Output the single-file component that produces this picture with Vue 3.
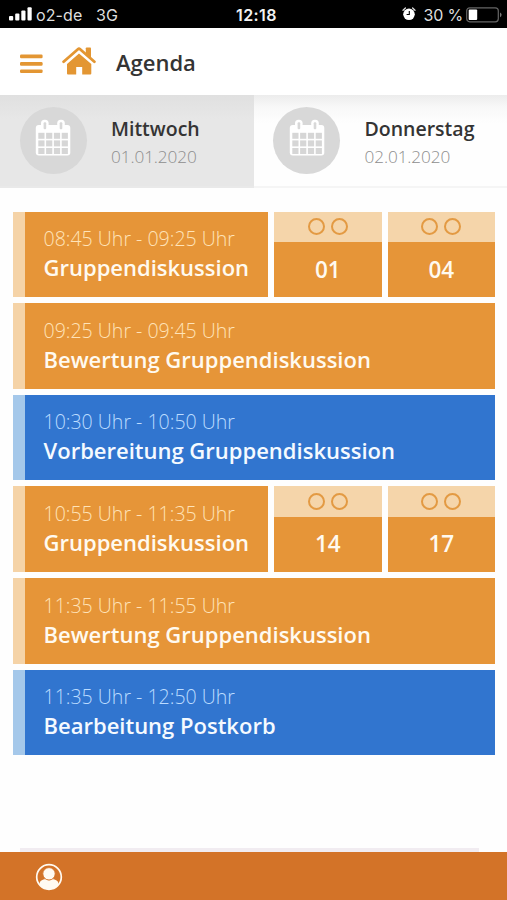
<script setup>
const days = [
  { name: 'Mittwoch', date: '01.01.2020', active: true },
  { name: 'Donnerstag', date: '02.01.2020', active: false },
]
const entries = [
  { time: '08:45 Uhr - 09:25 Uhr', title: 'Gruppendiskussion', rooms: ['01', '04'] },
  { time: '09:25 Uhr - 09:45 Uhr', title: 'Bewertung Gruppendiskussion' },
  { time: '10:30 Uhr - 10:50 Uhr', title: 'Vorbereitung Gruppendiskussion', blue: true },
  { time: '10:55 Uhr - 11:35 Uhr', title: 'Gruppendiskussion', rooms: ['14', '17'] },
  { time: '11:35 Uhr - 11:55 Uhr', title: 'Bewertung Gruppendiskussion' },
  { time: '11:35 Uhr - 12:50 Uhr', title: 'Bearbeitung Postkorb', blue: true },
]
const cells = [0, 1, 2, 3]
</script>

<template>
  <div class="screen">
    <div class="status">
      <svg class="signal" width="23" height="14" viewBox="0 0 23 14" fill="#fff">
        <rect x="0" y="9" width="4.2" height="4.6" rx="1" />
        <rect x="6.2" y="6.6" width="4.2" height="7" rx="1" />
        <rect x="12.3" y="3.6" width="4.2" height="10" rx="1" />
        <rect x="18.5" y="0.3" width="4.2" height="13.3" rx="1" />
      </svg>
      <span class="carrier">o2-de</span>
      <span class="network">3G</span>
      <span class="clock">12:18</span>
      <svg class="alarm" width="14" height="14" viewBox="0 0 14 14">
        <path d="M1 3.2 3.4 1M13 3.2 10.6 1" stroke="#ddd" stroke-width="1.3" stroke-linecap="round" />
        <circle cx="7" cy="7.3" r="5.8" fill="#fff" />
        <path d="M7.3 3.9v3.6H4.6" fill="none" stroke="#000" stroke-width="1.1" />
      </svg>
      <span class="percent">30 %</span>
      <svg class="battery" width="36" height="16" viewBox="0 0 36 16">
        <rect x="0.7" y="0.8" width="31.6" height="14" rx="3" fill="none" stroke="#666" stroke-width="1.2" />
        <rect x="2.7" y="2.6" width="8.5" height="10.4" rx="1" fill="#fff" />
        <path d="M34 5.4q1.6.8 1.6 2.4T34 10.2z" fill="#777" />
      </svg>
    </div>

    <header class="header">
      <svg class="menu" width="23" height="20" viewBox="0 0 23 20" fill="#e39633">
        <rect x="0" y="0.6" width="22.6" height="3.6" rx="1.2" />
        <rect x="0" y="8.1" width="22.6" height="3.6" rx="1.2" />
        <rect x="0" y="15.4" width="22.6" height="3.6" rx="1.2" />
      </svg>
      <svg class="home" width="34" height="29" viewBox="0 0 34 29">
        <path d="M17 6.4 29.3 17v9.4q0 1-1 1h-8.1v-7.4h-6v7.4H6q-1 0-1-1V17z" fill="#e39633" />
        <path d="M1.6 15.4 17 2.2l15.4 13.2" fill="none" stroke="#fff" stroke-width="4.4" />
        <path d="M23.8 1.3q0-.8.8-.8h3.6q.8 0 .8.8v10.4L23.8 7z" fill="#e39633" />
        <path d="M1.6 14.7 15.9 2.2q1.1-1 2.2 0l14.3 12.5" fill="none" stroke="#e39633" stroke-width="2.8" stroke-linecap="round" />
      </svg>
      <h1>Agenda</h1>
    </header>

    <nav class="days">
      <div v-for="d in days" :key="d.name" class="day" :class="{ active: d.active }">
        <div class="badge">
          <svg width="36" height="38" viewBox="0 0 36 38">
            <rect x="0.8" y="6" width="34.5" height="30.6" rx="3" fill="#fff" />
            <rect x="6" y="0.8" width="7.6" height="12" rx="3.5" fill="#fff" />
            <rect x="22.2" y="0.8" width="7.6" height="12" rx="3.5" fill="#fff" />
            <rect x="8.6" y="3.2" width="2.6" height="7" rx="1" fill="#d8d8d8" />
            <rect x="24.7" y="3.2" width="2.6" height="7" rx="1" fill="#d8d8d8" />
            <g fill="#d6d6d6">
              <template v-for="r in 3" :key="r">
                <rect v-for="c in cells" :key="c" :x="3.3 + c * 7.8" :y="13.8 + (r - 1) * 7.6" width="6.2" height="6" />
              </template>
            </g>
          </svg>
        </div>
        <div class="day-text">
          <div class="day-name">{{ d.name }}</div>
          <div class="day-date">{{ d.date }}</div>
        </div>
      </div>
    </nav>

    <main class="agenda">
      <div v-for="(e, i) in entries" :key="i" class="row">
        <section class="entry" :class="{ blue: e.blue }">
          <div class="time">{{ e.time }}</div>
          <div class="title">{{ e.title }}</div>
        </section>
        <div v-for="room in e.rooms" :key="room" class="room">
          <div class="rings"><i></i><i></i></div>
          <div class="number">{{ room }}</div>
        </div>
      </div>
    </main>

    <div class="peek"></div>
    <footer class="footer">
      <svg width="28" height="28" viewBox="0 0 28 28">
        <defs>
          <clipPath id="profile-clip"><circle cx="14" cy="14" r="12.5" /></clipPath>
        </defs>
        <g clip-path="url(#profile-clip)" fill="#fffaf2">
          <path d="M4.5 28v-7q.3-3.4 4-4.4l2-.6q3.5 2.5 7 0l2 .6q3.700 1 4 4.400v7z" />
          <circle cx="14" cy="10.800" r="6.200" stroke="#d37328" stroke-width="0.900" />
        </g>
        <circle cx="14" cy="14" r="12.300" fill="none" stroke="#fffaf2" stroke-width="1.700" />
      </svg>
    </footer>
  </div>
</template>

<style>
body {
  margin: 0;
  background: #fff;
}
</style>

<style scoped>
.screen {
  width: 507px;
  height: 900px;
  display: flex;
  flex-direction: column;
  overflow: hidden;
  background: #fefefe;
  font-family: "Open Sans", "Noto Sans", sans-serif;
}
.status {
  height: 27.5px;
  flex: none;
  display: flex;
  align-items: center;
  box-sizing: border-box;
  padding: 3px 5px 0 9px;
  background: #000;
  color: #dedede;
  font: 16px/24px Inter, "Liberation Sans", sans-serif;
  white-space: nowrap;
}
.signal {
  margin-bottom: 2px;
}
.carrier {
  width: 60px;
  margin-left: 4px;
  letter-spacing: 0.1px;
}
.network {
  width: 140px;
}
.clock {
  width: 165.5px;
  color: #f2f2f2;
  font-weight: 600;
  letter-spacing: 0.4px;
}
.alarm {
  margin-bottom: 2px;
}
.percent {
  width: 39px;
  margin-left: 8px;
  letter-spacing: -0.2px;
}
.battery {
  margin-left: auto;
}
.header {
  height: 67px;
  flex: none;
  box-sizing: border-box;
  display: flex;
  align-items: center;
  padding: 4px 20px 0;
  background: #fff;
}
.menu {
  margin-top: 1px;
}
.home {
  margin-left: 19px;
  margin-top: -3px;
}
h1 {
  margin: 0 0 3px 20px;
  color: #343434;
  font-size: 22px;
  line-height: 30px;
  font-weight: 600;
}
.days {
  height: 93px;
  flex: none;
  display: grid;
  grid-template-columns: 253.5px 253.5px;
}
.day {
  box-sizing: border-box;
  display: flex;
  align-items: center;
  padding: 0 0 0 19.5px;
  background: linear-gradient(#ececec, #f8f8f8 12px, #fefefe 28px);
  border-bottom: 2px solid #f5f5f5;
}
.day.active {
  background: linear-gradient(#e0e0e0, #e7e7e7 24px);
  border-bottom-color: #e9e9e9;
}
.badge {
  width: 67px;
  height: 67px;
  flex: none;
  display: flex;
  justify-content: center;
  align-items: center;
  box-sizing: border-box;
  padding-bottom: 4px;
  border-radius: 50%;
  background: #d8d8d8;
}
.day-text {
  margin: 5px 0 0 24.5px;
}
.day-name {
  color: #343434;
  font-size: 19.5px;
  line-height: 28px;
  font-weight: 600;
}
.day-date {
  color: #8e8e8e;
  font-size: 17.2px;
  line-height: 27px;
  font-weight: 300;
  letter-spacing: -0.1px;
}
.agenda {
  display: flex;
  flex-direction: column;
  gap: 6.1px;
  padding: 24.2px 12px 0 13px;
}
.row {
  height: 85.5px;
  display: flex;
  gap: 6px;
}
.entry {
  flex: 1;
  box-sizing: border-box;
  padding: 13.5px 0 0 18.5px;
  border-left: 12.5px solid #f5d3a7;
  background: #e69538;
  color: #fffaf0;
  white-space: nowrap;
}
.entry.blue {
  border-left-color: #a5c8ea;
  background: #3175cf;
  color: #f5faff;
}
.time {
  color: #ffe3b8;
  font-size: 19.55px;
  line-height: 28px;
  font-weight: 300;
}
.blue .time {
  color: #bcdcff;
}
.title {
  font-size: 22px;
  line-height: 28px;
  font-weight: 600;
}
.room {
  width: 107.5px;
  flex: none;
  display: flex;
  flex-direction: column;
  background: #e69538;
}
.rings {
  height: 30.5px;
  flex: none;
  display: flex;
  justify-content: center;
  align-items: center;
  gap: 6px;
  background: #f5d5aa;
}
.rings i {
  width: 17px;
  height: 17px;
  box-sizing: border-box;
  border: 2px solid #e39a43;
  border-radius: 50%;
}
.number {
  padding-top: 12.5px;
  color: #fffaf0;
  font-size: 22.5px;
  line-height: 30px;
  font-weight: 600;
  text-align: center;
}
.peek {
  width: 459px;
  height: 4px;
  flex: none;
  margin: auto 0 0 20px;
  background: #f1ecf1;
}
.footer {
  height: 48.5px;
  flex: none;
  box-sizing: border-box;
  padding: 11.5px 0 0 35px;
  background: #d37328;
}
</style>
